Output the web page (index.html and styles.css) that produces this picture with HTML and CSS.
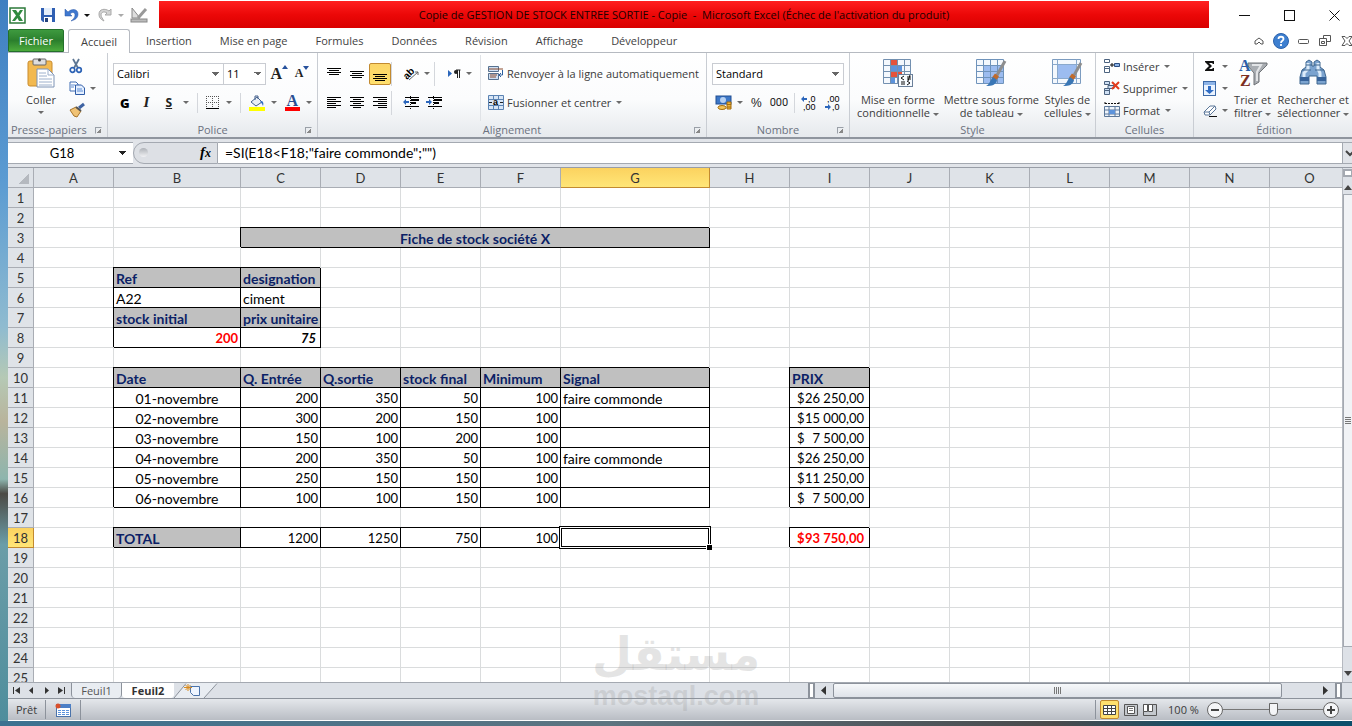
FILE: index.html
```html
<!DOCTYPE html>
<html lang="fr">
<head>
    <meta charset="UTF-8">
    <meta name="viewport" content="width=device-width, initial-scale=1.0">
    <title>Copie de GESTION DE STOCK ENTREE SORTIE - Copie - Microsoft Excel</title>
    <link rel="stylesheet" href="styles.css">
    <script src="sheet.js" defer></script>
</head>
<body>
<div class="window">

    <!-- Title bar -->
    <header class="titlebar">
        <div class="quick">
            <svg width="17" height="17" viewBox="0 0 17 17"><rect x="1" y="1" width="15" height="15" fill="#fff" stroke="#2c7a3a" stroke-width="1.500"/><path d="M3 3h4l2 3 2-3h3l-3.500 5.500L14 14h-4l-1.500-3L6 14H3l4-5.500z" fill="#2f8a3f"/></svg>
            <i class="vsep"></i>
            <button class="icon" aria-label="Enregistrer"><svg width="16" height="16" viewBox="0 0 16 16"><path d="M1 1h14v14H3l-2-2z" fill="#2f5fb3"/><rect x="4" y="1" width="8" height="7" fill="#e4eefb"/><rect x="4" y="10" width="8" height="5" fill="#fff"/><rect x="5" y="11" width="3" height="4" fill="#24427c"/></svg></button>
            <button class="icon undo" aria-label="Annuler"><svg width="16" height="16" viewBox="0 0 16 16"><path d="M2 2v7h7L7 7c3-3 5-1 5 1 0 3-2 4-4 6 4-1 7-3 7-7 0-5-6-6-10-2z" fill="#3f78cf" stroke="#2a57a5" stroke-width=".5"/></svg></button>
            <i class="caret dark"></i>
            <button class="icon redo" aria-label="Rétablir"><svg width="16" height="16" viewBox="0 0 16 16"><path d="M14 2v6H8l2-2C7 4 4 5 4 8c0 2 2 4 3 6-4-2-5-4-5-7 0-5 6-6 10-3z" fill="#d4d4d4" stroke="#a9a9a9"/></svg></button>
            <i class="caret pale"></i>
            <button class="icon rule" aria-label="Mode création"><svg width="18" height="16" viewBox="0 0 18 16"><path d="M2 1v10h8z" fill="#ddd" stroke="#888"/><path d="M16 2 8 11" stroke="#999" stroke-width="3"/><rect x="1" y="12" width="16" height="3" fill="#bbb" stroke="#888"/></svg></button>
            <i class="vsep"></i>
            <button class="icon more" aria-label="Personnaliser"><svg width="8" height="8" viewBox="0 0 8 8"><path d="M0 1h8" stroke="#111"/><path d="M0 4h8L4 8z" fill="#111"/></svg></button>
        </div>
        <h1 class="caption">Copie de GESTION DE STOCK ENTREE SORTIE - Copie&nbsp; -&nbsp; Microsoft Excel (Échec de l'activation du produit)</h1>
        <div class="controls">
            <button class="icon" aria-label="Réduire"><svg width="11" height="11"><path d="M0 5.500h11" stroke="#111"/></svg></button>
            <button class="icon" aria-label="Agrandir"><svg width="11" height="11"><rect x=".5" y=".5" width="10" height="10" fill="none" stroke="#111"/></svg></button>
            <button class="icon" aria-label="Fermer"><svg width="11" height="11"><path d="M.5.5l10 10M10.500.5l-10 10" stroke="#111"/></svg></button>
        </div>
    </header>

    <!-- Ribbon tabs -->
    <nav class="tabs">
        <button class="tab file">Fichier</button>
        <button class="tab active">Accueil</button>
        <button class="tab">Insertion</button>
        <button class="tab">Mise en page</button>
        <button class="tab">Formules</button>
        <button class="tab">Données</button>
        <button class="tab">Révision</button>
        <button class="tab">Affichage</button>
        <button class="tab">Développeur</button>
        <div class="doc-controls">
            <button class="icon" aria-label="Réduire le ruban"><svg width="10" height="8" viewBox="0 0 10 8"><path d="M1 4l4-3 4 3v3H7L5 5 3 7H1z" fill="#fff" stroke="#555"/></svg></button>
            <button class="icon" aria-label="Aide"><svg width="16" height="16" viewBox="0 0 16 16"><circle cx="8" cy="8" r="7.500" fill="#3d7fd0" stroke="#2b62ac"/><path d="M5.500 6c0-3 5-3 5 0 0 2-2.500 1.500-2.500 4M8 11v2" fill="none" stroke="#fff" stroke-width="1.800"/></svg></button>
            <button class="icon" aria-label="Réduire la fenêtre"><svg width="11" height="6"><rect x=".5" y="1.500" width="10" height="4" rx="1" fill="#fff" stroke="#555"/></svg></button>
            <button class="icon" aria-label="Restaurer la fenêtre"><svg width="12" height="11" viewBox="0 0 12 11"><path d="M4.500.5h7v6h-7z" fill="#fff" stroke="#555"/><path d="M.5 3.500h7v7h-7z" fill="#fff" stroke="#555"/><path d="M2.500 6.500h3v2h-3z" fill="none" stroke="#555"/></svg></button>
            <button class="icon" aria-label="Fermer la fenêtre"><svg width="12" height="10" viewBox="0 0 12 10"><path d="M1 .5h3l2 2 2-2h3L8 5l3 4.500H8l-2-2-2 2H1L4 5z" fill="#fff" stroke="#555"/></svg></button>
        </div>
    </nav>

    <!-- Ribbon -->
    <section class="ribbon">
        <div class="group clipboard">
            <div class="tools">
                <button class="big">
                    <svg width="28" height="30" viewBox="0 0 28 30"><rect x="1" y="3" width="24" height="25" rx="2" fill="#f2b950" stroke="#c98b2c"/><rect x="6" y="1" width="13" height="6" rx="1" fill="#ddd" stroke="#666"/><circle cx="12.500" cy="2" r="1.500" fill="#444"/><path d="M10 11h11l6 6v12H10z" fill="#fff" stroke="#7d93b5"/><path d="M21 11v6h6M12 15h7M12 18h8M12 21h13M12 24h13M12 27h13" fill="none" stroke="#9db0cc"/></svg>
                    <span>Coller</span><i class="caret"></i>
                </button>
                <div class="stack">
                    <button class="icon" aria-label="Couper"><svg width="14" height="15" viewBox="0 0 14 15"><path d="M4 0l5 9M10 0L5 9" stroke="#5d7693" stroke-width="1.800"/><circle cx="3.500" cy="11" r="2.300" fill="none" stroke="#2c62b5" stroke-width="1.700"/><circle cx="10" cy="11" r="2.300" fill="none" stroke="#2c62b5" stroke-width="1.700"/></svg></button>
                    <button class="icon" aria-label="Copier"><svg width="16" height="14" viewBox="0 0 16 14"><path d="M1 1h6l2 2v7H1z" fill="#fff" stroke="#3e6cb4"/><path d="M6.500 4h6l3 3v6.500h-9z" fill="#e4efff" stroke="#2f5ca7"/><path d="M8 8h5M8 10h6M2 4h4M2 6h3" stroke="#5b8bd4"/></svg><i class="caret"></i></button>
                    <button class="icon" aria-label="Reproduire la mise en forme"><svg width="16" height="15" viewBox="0 0 16 15"><path d="M15 1l-5 4" stroke="#3d62a2" stroke-width="3"/><path d="M1 7l6-3 5 4-4 6-3-1z" fill="#f0c274" stroke="#a6742a"/><path d="M7 4l5 4" stroke="#555" stroke-width="2"/></svg></button>
                </div>
            </div>
            <div class="group-name">Presse-papiers<i class="launcher"></i></div>
        </div>

        <div class="group font">
            <div class="tools rows">
                <div class="row tight">
                    <select class="combo name" aria-label="Police"><option>Calibri</option></select>
                    <select class="combo size" aria-label="Taille"><option>11</option></select>
                    <button class="glyph serif grow" aria-label="Agrandir la police">A<svg width="6" height="4"><path d="M0 4l3-4 3 4z" fill="#27519c"/></svg></button>
                    <button class="glyph serif shrink" aria-label="Réduire la police">A<svg width="6" height="4"><path d="M0 0h6L3 4z" fill="#27519c"/></svg></button>
                </div>
                <div class="row">
                    <button class="glyph bold">G</button>
                    <button class="glyph italic">I</button>
                    <button class="glyph under">S</button><i class="caret"></i>
                    <i class="vsep"></i>
                    <button class="icon" aria-label="Bordures"><svg width="14" height="14" viewBox="0 0 14 14"><path d="M.5 0v13M6.500 0v13M12.500 0v13M0 .5h13M0 6.500h13" stroke="#555" stroke-dasharray="1 1"/><path d="M0 12.500h13" stroke="#000"/></svg></button><i class="caret"></i>
                    <i class="vsep"></i>
                    <button class="icon" aria-label="Remplissage"><svg width="16" height="16" viewBox="0 0 16 16"><path d="M2 7l6-5 5 5-6 4z" fill="#e8eef7" stroke="#44618c"/><path d="M6 5V1h3v3" fill="none" stroke="#44618c"/><path d="M12 6c2 0 3 2 2 5-1-2-1-3-3-4z" fill="#356fc4"/><rect y="12" width="16" height="4" fill="#ff0"/></svg></button><i class="caret"></i>
                    <button class="glyph serif color">A</button><i class="caret"></i>
                </div>
            </div>
            <div class="group-name">Police<i class="launcher"></i></div>
        </div>

        <div class="group align">
            <div class="tools">
                <div class="stack wide">
                    <div class="row">
                        <button class="icon" aria-label="Aligner en haut"><svg width="14" height="14"><path d="M0 1.500h14M2 3.500h10M0 5.500h14M2 7.500h10" stroke="#000"/></svg></button>
                        <button class="icon" aria-label="Aligner au centre"><svg width="14" height="14"><path d="M0 4.500h14M2 6.500h10M0 8.500h14M2 10.500h10" stroke="#000"/></svg></button>
                        <button class="icon pressed" aria-label="Aligner en bas"><svg width="14" height="14"><path d="M0 7.500h14M2 9.500h10M0 11.500h14M2 13.500h10" stroke="#000"/></svg></button>
                        <i class="vsep"></i>
                        <button class="icon" aria-label="Orientation"><svg width="15" height="15" viewBox="0 0 15 15"><text x="0" y="11" class="ab" transform="rotate(-45 5 9)">ab</text><path d="M5 14l9-8M11 6h3v3" fill="none" stroke="#666"/></svg><i class="caret"></i></button>
                        <i class="vsep"></i>
                        <button class="icon" aria-label="Sens du texte"><svg width="13" height="10" viewBox="0 0 13 10"><path d="M0 1v7l4-3.500z" fill="#2b66bb"/><path d="M12.500 1H8M9.500 1v8M11.500 1v8" stroke="#222" fill="none"/><circle cx="8" cy="3" r="2" fill="#222"/></svg><i class="caret"></i></button>
                    </div>
                    <div class="row">
                        <button class="icon" aria-label="Gauche"><svg width="14" height="11"><path d="M0 .5h14M0 2.500h9M0 4.500h14M0 6.500h9M0 8.500h14M0 10.500h9" stroke="#000"/></svg></button>
                        <button class="icon" aria-label="Centrer"><svg width="14" height="11"><path d="M0 .5h14M3 2.500h8M0 4.500h14M3 6.500h8M0 8.500h14M3 10.500h8" stroke="#000"/></svg></button>
                        <button class="icon" aria-label="Droite"><svg width="14" height="11"><path d="M0 .5h14M5 2.500h9M0 4.500h14M5 6.500h9M0 8.500h14M5 10.500h9" stroke="#000"/></svg></button>
                        <i class="vsep"></i>
                        <button class="icon" aria-label="Diminuer le retrait"><svg width="16" height="14" viewBox="0 0 16 14"><path d="M2 1.500h14M2 10.500h14" stroke="#000"/><path d="M8 4h8M8 7h5" stroke="#000" stroke-width="2"/><path d="M7.500 0v14" stroke="#000" stroke-dasharray="1 1"/><path d="M0 6l3-3v2h3v2H3v2z" fill="#2b66bb"/></svg></button>
                        <button class="icon" aria-label="Augmenter le retrait"><svg width="16" height="14" viewBox="0 0 16 14"><path d="M2 1.500h14M2 10.500h14" stroke="#000"/><path d="M8 4h8M8 7h5" stroke="#000" stroke-width="2"/><path d="M7.500 0v14" stroke="#000" stroke-dasharray="1 1"/><path d="M6 6L3 3v2H0v2h3v2z" fill="#2b66bb"/></svg></button>
                    </div>
                </div>
                <div class="stack wrap">
                    <button class="label"><svg width="16" height="15" viewBox="0 0 16 15"><path d="M.5.5h10v5H.5zM.5 7.500h10v6H.5z" fill="#cfe0f4" stroke="#57718f"/><path d="M1 3h14M2 9h7M2 11h6" stroke="#8a4b2c"/><path d="M14.500 4v5h-3M13 7l-2 2 2 2" fill="none" stroke="#2b5f9f"/></svg>Renvoyer à la ligne automatiquement</button>
                    <button class="label"><svg width="16" height="15" viewBox="0 0 16 15"><path d="M.5.5h15v14H.5zM.5 4.500h15M.5 10.500h15M5.500.5v4M10.500.5v4M5.500 10.500v4M10.500 10.500v4" fill="#d8e6f6" stroke="#5b83b3"/><path d="M1 7.500h3M12 7.500h3" stroke="#222"/><text x="5" y="10" class="mini">a</text></svg>Fusionner et centrer<i class="caret"></i></button>
                </div>
            </div>
            <div class="group-name">Alignement<i class="launcher"></i></div>
        </div>

        <div class="group number">
            <div class="tools rows">
                <div class="row"><select class="combo format" aria-label="Format de nombre"><option>Standard</option></select></div>
                <div class="row">
                    <button class="icon" aria-label="Format comptabilité"><svg width="17" height="16" viewBox="0 0 17 16"><rect x="1" y="1" width="15" height="8" fill="#3c77c7" stroke="#214e92"/><ellipse cx="8" cy="5" rx="3" ry="3" fill="#b5d0f2"/><path d="M12 7h4v7h-4z" fill="#f0b536" stroke="#a36d10"/><path d="M12 9.500h4M12 12h4" stroke="#a36d10"/><ellipse cx="7" cy="12.500" rx="4" ry="2" fill="#f4c558" stroke="#a36d10"/></svg><i class="caret"></i></button>
                    <button class="glyph plain">%</button>
                    <button class="glyph plain zeros">000</button>
                    <i class="vsep"></i>
                    <button class="icon" aria-label="Ajouter une décimale"><svg width="16" height="16" viewBox="0 0 16 16"><path d="M0 4l3-3v2h3v2H3v2z" fill="#2b66bb"/><text x="7" y="7" class="dec">,0</text><text x="2" y="15" class="dec">,00</text></svg></button>
                    <button class="icon" aria-label="Réduire les décimales"><svg width="16" height="16" viewBox="0 0 16 16"><path d="M6 12l-3-3v2H0v2h3v2z" fill="#2b66bb"/><text x="2" y="7" class="dec">,00</text><text x="7" y="15" class="dec">,0</text></svg></button>
                </div>
            </div>
            <div class="group-name">Nombre<i class="launcher"></i></div>
        </div>

        <div class="group style">
            <div class="tools">
                <button class="big">
                    <svg width="30" height="30" viewBox="0 0 30 30"><path d="M.5 1.500h27v24H.5z" fill="#f4f8fd"/><path d="M7 1h7v6H7z" fill="#e4523b"/><path d="M7 7h12v6H7z" fill="#5c93dc"/><path d="M7 13h12v6H7z" fill="#e4523b"/><path d="M7 19h5v6H7z" fill="#5c93dc"/><path d="M.5 1.500h27v24H.5zM.5 7.500h27M.5 13.500h27M.5 19.500h27M7.500 1.500v24M14.500 1.500v24M21.500 1.500v24" fill="none" stroke="#7390b0"/><rect x="15.500" y="16.500" width="14" height="12" fill="#f7fbff" stroke="#6a7f99"/><path d="M21 18l-3 2 3 2M18 24h4M18 26h4M24 19h4M24 21h4M27 17l-2 6M24 23l3 2-3 2" fill="none" stroke="#111"/></svg>
                    <span>Mise en forme<br>conditionnelle <i class="caret"></i></span>
                </button>
                <button class="big">
                    <svg width="30" height="30" viewBox="0 0 30 30"><path d="M.5 1.500h27v24H.5z" fill="#f4f8fd"/><path d="M7 7h21v18H7z" fill="#9cbcf0"/><path d="M.5 1.500h27v24H.5zM.5 7.500h27M.5 13.500h27M.5 19.500h27M7.500 1.500v24M14.500 1.500v24M21.500 1.500v24" fill="none" stroke="#6f93bb"/><path d="M29 3l-9 16" stroke="#8d8d8d" stroke-width="3"/><path d="M21 17l-3 4" stroke="#c06a2b" stroke-width="5"/><path d="M17 19l4 3c-1 5-5 6-11 6 4-2 4-6 7-9z" fill="#3976b5"/></svg>
                    <span>Mettre sous forme<br>de tableau <i class="caret"></i></span>
                </button>
                <button class="big">
                    <svg width="30" height="30" viewBox="0 0 30 30"><path d="M.5 1.500h28v24H.5z" fill="#f4f8fd" stroke="#7c9cc0"/><path d="M5 6h19v15H5z" fill="#9cbcf0"/><path d="M5.500 1.500v24M24.500 1.500v24M.5 6.500h28M.5 20.500h28" stroke="#8aa9cc"/><path d="M29 5l-8 14" stroke="#8d8d8d" stroke-width="3"/><path d="M22 17l-3 4" stroke="#c06a2b" stroke-width="5"/><path d="M18 19l4 3c-1 5-5 6-11 6 4-2 4-6 7-9z" fill="#3976b5"/></svg>
                    <span>Styles de<br>cellules <i class="caret"></i></span>
                </button>
            </div>
            <div class="group-name">Style</div>
        </div>

        <div class="group cells">
            <div class="tools">
                <div class="stack">
                    <button class="label"><svg width="16" height="14" viewBox="0 0 16 14"><path d="M.5.5h5v3h-5zM.5 7.500h5v2h-5zM.5 9.500h5v4h-5z" fill="#fff" stroke="#4b627f"/><path d="M10.500 4.500h5v3h-5z" fill="#8db4e8" stroke="#2b4d80"/><path d="M6 6h4M8 4v4" stroke="#111"/></svg>Insérer<i class="caret"></i></button>
                    <button class="label"><svg width="16" height="14" viewBox="0 0 16 14"><path d="M.5.5h5v3h-5zM.5 7.500h5v2h-5zM.5 9.500h5v4h-5zM4 4.500h6v3H4z" fill="#cfe0f4" stroke="#4b627f"/><path d="M8 1l7 7M15 1L8 8" stroke="#e23b1d" stroke-width="2"/></svg>Supprimer<i class="caret"></i></button>
                    <button class="label"><svg width="16" height="16" viewBox="0 0 16 16"><path d="M.5 4.500h15v10H.5zM.5 8h15M.5 12h15M5 4v11M11 4v11" fill="#eef4fb" stroke="#5b7799"/><path d="M5 8h6v4H5z" fill="#5c93dc"/><path d="M1 1.500h14M1 0v3M15 0v3" stroke="#111" stroke-dasharray="2 1"/></svg>Format<i class="caret"></i></button>
                </div>
            </div>
            <div class="group-name">Cellules</div>
        </div>

        <div class="group edit">
            <div class="tools">
                <div class="stack">
                    <button class="icon" aria-label="Somme"><svg width="14" height="12" viewBox="0 0 14 12"><path d="M2 1h9v3h-1l-1-1H6l3 3-3 3h3l1-1h1v3H2v-1l4-4-4-4z" fill="#111"/></svg><i class="caret"></i></button>
                    <button class="icon" aria-label="Remplir"><svg width="14" height="15" viewBox="0 0 14 15"><rect x=".5" y=".5" width="12" height="14" fill="#eaf3ff" stroke="#3d6aa8"/><path d="M1 1h11v3H1z" fill="#8db4e8"/><path d="M5 5h3v4h3l-4.500 4L2 9h3z" fill="#2f6cc4"/></svg><i class="caret"></i></button>
                    <button class="icon" aria-label="Effacer"><svg width="14" height="13" viewBox="0 0 14 13"><path d="M1 8l6-6h5l1 3-6 6H2z" fill="#fff" stroke="#5b7799"/><path d="M1 8h5l6-6M6 8l1 3" fill="none" stroke="#5b7799"/><path d="M6 12.500h8" stroke="#111"/></svg><i class="caret"></i></button>
                </div>
                <button class="big">
                    <svg width="30" height="30" viewBox="0 0 30 30"><path d="M10 5h19v2l-8 8v9l-5 3V15l-6-7z" fill="#a9adb2" stroke="#6f7377"/><path d="M14 7h9l-4 7v9" fill="none" stroke="#e2e4e6" stroke-width="2"/><text x="1" y="13" class="az blue">A</text><text x="2" y="28" class="az red">Z</text></svg>
                    <span>Trier et<br>filtrer <i class="caret"></i></span>
                </button>
                <button class="big">
                    <svg width="30" height="30" viewBox="0 0 30 30"><path d="M8 4l3-2 3 2v4h2V4l3-2 3 2v5l4 3 2 7v7h-9v-8h-8v8H2v-7l2-7 4-3z" fill="#7ba3cf" stroke="#3f668f"/><path d="M2 19h9v4H2zM19 19h9v4h-9z" fill="#37639a"/><path d="M10 5v6l-4 4v4M20 5v6l2 4v4" stroke="#dcebf9" stroke-width="3" fill="none"/><path d="M4 12h9M17 12h9M8 7h6M16 7h6" stroke="#3f668f"/></svg>
                    <span>Rechercher et<br>sélectionner <i class="caret"></i></span>
                </button>
            </div>
            <div class="group-name">Édition</div>
        </div>
    </section>

    <!-- Formula bar -->
    <div class="formula-bar">
        <input class="name-box" aria-label="Zone Nom" value="G18"><i class="caret dark"></i>
        <div class="fx-area"><i class="knob"></i><button class="fx" aria-label="Insérer une fonction">f<small>x</small></button></div>
        <input class="formula" aria-label="Formule" value='=SI(E18&lt;F18;"faire commonde";"")'>
        <button class="expand" aria-label="Développer"><svg width="8" height="6"><path d="M0 1l4 4 4-4" fill="none" stroke="#444" stroke-width="2"/></svg></button>
    </div>

    <!-- Worksheet -->
    <main class="work">
        <div class="sheet"><table class="grid" id="grid"></table></div>
        <div class="vscroll">
            <i class="split"></i>
            <svg class="arrow" width="8" height="5"><path d="M0 5l4-5 4 5z" fill="#444"/></svg>
            <div class="vthumb"><i></i></div>
            <svg class="arrow" width="8" height="5"><path d="M0 0h8L4 5z" fill="#444"/></svg>
        </div>
        <div class="watermark"><span class="arabic" lang="ar">مستقل</span><span>mostaql.com</span></div>
    </main>

    <div class="sheet-bar">
        <div class="sheet-nav">
            <button class="icon" aria-label="Première"><svg width="7" height="7"><path d="M.5 0v7" stroke="#333"/><path d="M7 0v7L2 3.500z" fill="#333"/></svg></button>
            <button class="icon" aria-label="Précédente"><svg width="7" height="7"><path d="M5 0v7L1 3.500z" fill="#333"/></svg></button>
            <button class="icon" aria-label="Suivante"><svg width="7" height="7"><path d="M2 0v7l4-3.500z" fill="#333"/></svg></button>
            <button class="icon" aria-label="Dernière"><svg width="7" height="7"><path d="M6.500 0v7" stroke="#333"/><path d="M0 0v7l5-3.500z" fill="#333"/></svg></button>
        </div>
        <button class="sheet-tab">Feuil1</button>
        <button class="sheet-tab current">Feuil2</button>
        <button class="new-sheet" aria-label="Insérer une feuille"><svg width="44" height="15" viewBox="0 0 44 15"><path d="M0 15L12 0h32L30 15z" fill="#e9edf2"/><path d="M0 15L12 .5M30 15L43 .5" stroke="#8c929b"/><path d="M16.500 3.500h9v9h-6l-3-3z" fill="#eef5ff" stroke="#4b73aa"/><path d="M14 1v7M10 4.500h8M11.500 2l5 5M16.500 2l-5 5" stroke="#d98b1e"/></svg></button>
        <div class="hscroll">
            <i class="handle"></i>
            <svg width="6" height="9"><path d="M5 0v9L0 4.500z" fill="#333"/></svg>
            <div class="hthumb"><i></i></div>
            <svg class="right" width="6" height="9"><path d="M0 0v9l5-4.500z" fill="#333"/></svg>
            <i class="handle"></i>
        </div>
    </div>

    <!-- Status bar -->
    <footer class="status">
        <span class="ready">Prêt</span>
        <button class="icon macro" aria-label="Enregistrer une macro"><svg width="16" height="14" viewBox="0 0 16 14"><rect x="1.500" y="1.500" width="14" height="12" fill="#fff" stroke="#4b73aa"/><path d="M1 1h15v4H1z" fill="#4c7fc6"/><path d="M3 7.500h3M7 7.500h3M11 7.500h3M3 9.500h3M7 9.500h3M11 9.500h3M3 11.500h3M7 11.500h3M11 11.500h3" stroke="#5c93dc"/><circle cx="3" cy="3" r="2.500" fill="#d8502c"/></svg></button>
        <div class="views">
            <button class="icon on" aria-label="Normal"><svg width="13" height="10"><path d="M.5.5h12v9H.5zM.5 3.500h12M.5 6.500h12M4.500.5v9M8.500.5v9" fill="#fff" stroke="#444"/></svg></button>
            <button class="icon" aria-label="Mise en page"><svg width="14" height="12"><path d="M.5.500h13v11H.5z" fill="#c4c8cd" stroke="#555"/><path d="M3.500 2.500h7v7h-7z" fill="#fff" stroke="#555"/><path d="M5 4.500h4M5 6.500h4" stroke="#777"/></svg></button>
            <button class="icon" aria-label="Sauts de page"><svg width="14" height="12"><path d="M.5.500h13v11H.5z" fill="#c4c8cd" stroke="#555"/><path d="M.5.5h4v7h-4zM5.500.5h4v7h-4z" fill="#fff" stroke="#555"/></svg></button>
        </div>
        <label class="percent" for="zoom">100 %</label>
        <button class="round" aria-label="Zoom arrière"><svg width="8" height="8"><path d="M0 4h8" stroke="#444" stroke-width="2"/></svg></button>
        <input class="zoom" id="zoom" type="range" min="0" max="100" value="50">
        <button class="round" aria-label="Zoom avant"><svg width="8" height="8"><path d="M0 4h8M4 0v8" stroke="#444" stroke-width="2"/></svg></button>
    </footer>
</div>
</body>
</html>
```
FILE: styles.css
```css
* {
    box-sizing: border-box;
}
body {
    margin: 0;
    height: 100vh;
    overflow: hidden;
    padding: 0 0 5px 8px;
    font-family: "Open Sans", "Noto Sans", sans-serif;
    font-size: 11px;
    color: #3b3b3b;
    background: linear-gradient(to right, #3b7291, #5d7480 45%, #4a4a4c 78%, #0c4f6b 90%) bottom / 100% 5px no-repeat,
        linear-gradient(#3f7fc1, #5b9bd2 25%, #8fbbd0 45%, #b5c9b5 52%, #b9b49c 58%, #8db5ae 66%, #4b4a45 68%, #6b9da8 75%, #4e8d9c 100%);
}
button, input, select {
    font: inherit;
    color: inherit;
    border: none;
    background: none;
    padding: 0;
    margin: 0;
}
svg {
    display: block;
    flex: none;
    overflow: visible;
}
.window {
    height: 100%;
    display: flex;
    flex-direction: column;
    background: #fff;
    border-bottom: 1px solid #fff;
}
.icon {
    display: flex;
    align-items: center;
    gap: 5px;
}
.caret {
    display: inline-block;
    flex: none;
    border: 3px solid transparent;
    border-top-color: #6b6b6b;
    border-bottom: 0;
    vertical-align: middle;
}
.caret.dark {
    border-top-color: #111;
}
.caret.pale {
    border-top-color: #aaa;
}
.vsep {
    width: 1px;
    height: 14px;
    background: #a5a9af;
}

/* title bar */
.titlebar {
    display: flex;
    height: 29px;
    padding-top: 1px;
}
.quick {
    width: 151px;
    display: flex;
    align-items: center;
    gap: 7px;
    padding: 0 3px 0 1px;
}
.quick .caret {
    margin-left: -2px;
}
.quick .rule,
.quick .more {
    margin-left: -1px;
}
.caption {
    flex: 1;
    margin: 0;
    height: 27px;
    line-height: 28px;
    text-align: center;
    font-size: 11px;
    font-weight: normal;
    color: #200;
    background: linear-gradient(#ff2020, #ec0808 50%, #d90000);
    white-space: nowrap;
    overflow: hidden;
}
.controls {
    display: flex;
    gap: 34px;
    padding: 0 12px 0 30px;
}

/* ribbon tabs */
.tabs {
    height: 24px;
    display: flex;
    border-bottom: 1px solid #b6bac1;
}
.tab {
    padding: 0 14px;
    color: #3f3f3f;
}
.tab.file {
    width: 56px;
    padding: 0;
    margin-right: 4px;
    color: #fff;
    border: 1px solid #23702b;
    border-radius: 2px 2px 0 0;
    background: linear-gradient(#3e9a3f, #2b7f2d 50%, #4cab3c);
}
.tab.active {
    height: 24px;
    padding: 0 12px;
    margin-right: 2px;
    border: 1px solid #b6bac1;
    border-bottom: 0;
    border-radius: 3px 3px 0 0;
    background: #fff;
}
.doc-controls {
    display: flex;
    gap: 6px;
    margin: 0 -3px 0 auto;
}
.doc-controls .icon {
    width: 16px;
    justify-content: center;
}

/* ribbon */
.ribbon {
    display: flex;
    height: 86px;
    background: linear-gradient(#fff, #fbfcfd 55%, #e6e9ed);
    border-bottom: 2px solid #8f959e;
    overflow: hidden;
}
.group {
    flex: none;
    display: flex;
    flex-direction: column;
    border-right: 1px solid #c9cdd3;
    white-space: nowrap;
}
.clipboard {
    width: 100px;
}
.font {
    width: 210px;
}
.align {
    width: 389px;
}
.number {
    width: 143px;
}
.style {
    width: 246px;
}
.cells {
    width: 98px;
}
.edit {
    flex: 1;
    border-right: 0;
}
.tools {
    flex: 1;
    display: flex;
    padding: 2px 5px 0;
}
.tools.rows {
    flex-direction: column;
}
.group-name {
    display: flex;
    height: 16px;
    line-height: 17px;
    justify-content: center;
    color: #6c7280;
}
.launcher {
    width: 7px;
    height: 7px;
    margin: 6px 5px 0 auto;
    border: 1px solid #9aa0a8;
    border-right-color: transparent;
    border-bottom-color: transparent;
    background: linear-gradient(135deg, transparent 60%, #888 60%);
}
.group-name:has(.launcher)::before {
    content: "";
    width: 12px;
    margin-right: auto;
}
.clipboard .group-name:has(.launcher)::before {
    width: 3px;
    margin: 0;
}
.big {
    display: flex;
    flex-direction: column;
    align-items: center;
    padding-top: 3px;
    gap: 5px;
    line-height: 13px;
    text-align: center;
}
.clipboard .big {
    width: 56px;
}
.stack {
    display: flex;
    flex-direction: column;
    padding-left: 2px;
}
.clipboard .stack {
    padding-left: 0;
}
.stack > .icon,
.stack > .label {
    height: 22px;
}
.row {
    display: flex;
    align-items: center;
    height: 29px;
    margin-top: 4px;
}
.row + .row {
    margin-top: 0;
}
.label {
    display: flex;
    align-items: center;
    gap: 3px;
}
.label .caret {
    margin-left: 2px;
}
.combo {
    appearance: none;
    height: 22px;
    padding-left: 3px;
    border: 1px solid #c9ccd2;
    color: #000;
    background: linear-gradient(to bottom right, #666 50%, transparent 50%) right 3px center / 4px 4px no-repeat,
        linear-gradient(to bottom left, #666 50%, transparent 50%) right 7px center / 4px 4px no-repeat, #fff;
}
.combo.name {
    width: 112px;
}
.combo.size {
    width: 43px;
    border-left: 0;
}
.combo.format {
    width: 135px;
}
.font .row {
    gap: 8px;
}
.font .row.tight {
    gap: 0;
}
.glyph {
    display: flex;
    justify-content: center;
    color: #222;
}
.serif {
    font-family: "Liberation Serif", serif;
    font-weight: bold;
}
.grow {
    width: 26px;
    font-size: 16px;
}
.shrink {
    width: 20px;
    font-size: 12px;
}
.bold {
    width: 14px;
    font-size: 13px;
    font-weight: 800;
    color: #000;
    margin-left: 5px;
}
.italic {
    width: 14px;
    font: italic bold 15px "Liberation Serif", serif;
}
.under {
    width: 16px;
    font-size: 12px;
    font-weight: bold;
    text-decoration: underline;
}
.color {
    width: 16px;
    height: 17px;
    line-height: 13px;
    font-size: 16px;
    color: #2a4f93;
    border-bottom: 4px solid #f00;
}
.font .vsep {
    height: 20px;
    background: #d4d7dc;
}
.font .row .caret {
    margin-left: -2px;
}
.align .tools {
    padding-left: 8px;
}
.wide {
    width: 154px;
    padding: 0;
}
.wide .row {
    gap: 8px;
}
.wide .vsep {
    height: 24px;
    margin: 0 3px 0 -4px;
    background: #d4d7dc;
}
.wide .icon {
    width: 15px;
    justify-content: center;
}
.wide .icon:nth-child(n + 5) {
    width: 27px;
}
.wide .row + .row .icon:nth-child(n + 5) {
    width: 15px;
}
.wide .pressed {
    width: 22px;
    height: 22px;
    margin: 0 -4px 0 -3px;
    border: 1px solid #c28a30;
    border-radius: 2px;
    background: linear-gradient(#fcd567, #ffe06e);
}
.wrap {
    padding: 4px 0 0 7px;
    border-left: 1px solid #e0e3e7;
}
.wrap > .label {
    height: 29px;
}
.ab {
    font: bold 10px "Liberation Sans", sans-serif;
}
.mini {
    font: bold 9px "Liberation Sans", sans-serif;
}
.dec {
    font: 9px "Liberation Sans", sans-serif;
}
.number .row + .row {
    gap: 8px;
    padding-left: 3px;
}
.number .vsep {
    height: 20px;
    margin: 0 -2px;
    background: #d4d7dc;
}
.plain {
    font-size: 12px;
    font-family: "Liberation Sans", Arial, sans-serif;
}
.zeros {
    font-family: Roboto, sans-serif;
    font-size: 11px;
}
.style .tools {
    padding-left: 7px;
    gap: 5px;
}
.cells .tools {
    padding-left: 6px;
}
.edit .tools {
    padding-left: 7px;
    gap: 6px;
}
.az {
    font: bold 16px "Liberation Serif", serif;
}
.az.blue {
    fill: #2c5ea9;
}
.az.red {
    fill: #7c2e22;
}

/* formula bar */
.formula-bar {
    display: flex;
    align-items: center;
    height: 29px;
    padding: 3px 0 4px;
    background: #e1e4e9;
    border-bottom: 1px solid #989da6;
    font-family: Lato, sans-serif;
    font-size: 14px;
    color: #000;
}
.name-box {
    width: 108px;
    height: 22px;
    text-align: center;
    font-size: 13px;
    background: #fff;
    border: 1px solid #a4a9b1;
    border-width: 1px 0;
}
.formula-bar .caret {
    width: 17px;
    height: 22px;
    border: 1px solid #a4a9b1;
    border-width: 1px 0;
    background: linear-gradient(to bottom right, #222 50%, transparent 50%) 7px center / 4px 4px no-repeat,
        linear-gradient(to bottom left, #222 50%, transparent 50%) 3px center / 4px 4px no-repeat, #fff;
}
.fx-area {
    width: 85px;
    height: 22px;
    display: flex;
    align-items: center;
    justify-content: space-between;
    padding: 0 6px 0 5px;
    border: 1px solid #a4a9b1;
    border-radius: 11px 0 0 11px;
    background: #dde0e5;
}
.knob {
    width: 9px;
    height: 9px;
    border-radius: 50%;
    background: linear-gradient(#aeb2b8, #f1f2f4);
}
.fx {
    font: italic bold 15px "Liberation Serif", serif;
}
.fx small {
    font-size: 12px;
}
.formula {
    flex: 1;
    height: 22px;
    padding-left: 7px;
    background: #fff;
    border: 1px solid #a4a9b1;
    border-width: 1px 0;
}
.expand {
    width: 10px;
    height: 22px;
    overflow: hidden;
    padding-left: 3px;
    border: 1px solid #a4a9b1;
    border-right: 0;
}

/* worksheet */
.work {
    position: relative;
    flex: 1;
    min-height: 0;
    display: flex;
}
.sheet {
    flex: 1;
    min-width: 0;
    overflow: hidden;
}
.grid {
    width: 1342px;
    table-layout: fixed;
    border-collapse: separate;
    border-spacing: 0;
    font-family: Lato, sans-serif;
    font-size: 14px;
    color: #000;
}
.grid th,
.grid td {
    height: 20px;
    line-height: 17px;
    padding: 2px 2px 0;
    border: solid #dadcdd;
    border-width: 0 1px 1px 0;
    white-space: nowrap;
    text-align: left;
}
.grid th {
    padding: 2px 0 0;
    text-align: center;
    font-size: 13px;
    font-weight: normal;
    color: #333;
    background: #dfe3e8;
    border-color: #a9adb4;
}
.grid thead .hot,
.grid tbody .hot {
    background: linear-gradient(#fbd25f, #ffe678);
    border-color: #c28a30;
}
.corner {
    background: linear-gradient(135deg, transparent 50%, #b5b9bf 50%) 11px 6px / 10px 10px no-repeat, #dfe3e8 !important;
}
.col-head {
    width: 26px;
}
.col {
    width: 80px;
}
.col-b {
    width: 127px;
}
.col-g {
    width: 149px;
}
.grid .box {
    border-color: #000;
    box-shadow: -1px -1px 0 #000;
}
.grid .head {
    font-weight: bold;
    color: #0b1f66;
    background: #c0c0c0;
}
.grid .num {
    text-align: right;
    font-size: 13px;
}
.grid .mid {
    text-align: center;
}
.grid .red {
    font-weight: bold;
    color: #f00;
}
.grid .slant {
    font-weight: bold;
    font-style: italic;
    padding-right: 4px;
}
.grid .money {
    display: flex;
    justify-content: space-between;
    padding: 0 3px 0 5px;
    font-size: 13px;
}
.grid .selected {
    position: relative;
}
.selected::before {
    content: "";
    position: absolute;
    inset: -2px;
    border: 3px double #000;
    background: #fff;
}
.selected::after {
    content: "";
    position: absolute;
    right: -3px;
    bottom: -3px;
    width: 5px;
    height: 5px;
    background: #000;
    border: solid #fff;
    border-width: 1px 0 0 1px;
}
.vscroll {
    width: 10px;
    display: flex;
    flex-direction: column;
    align-items: center;
    overflow: hidden;
    background: #dde1e7;
    border-left: 1px solid #b5b9c0;
}
.split {
    width: 10px;
    height: 8px;
    margin: 1px 0 8px;
    background: #fff;
    border: 2px solid #a4a9b1;
}
.vthumb {
    flex: 1;
    width: 100%;
    margin: 4px 0 24px;
    display: flex;
    align-items: center;
    justify-content: center;
    background: #f1f3f6;
    border: 1px solid #a4a9b1;
    border-right: 0;
}
.vthumb i {
    width: 6px;
    height: 8px;
    background: repeating-linear-gradient(#777 0 1px, transparent 1px 2px);
}
.vscroll .arrow:last-child {
    margin-bottom: 6px;
}
/* stamp laid over the sheet and the bars under it */
.watermark {
    position: absolute;
    left: 587px;
    bottom: -28px;
    width: 162px;
    z-index: 2;
    display: flex;
    flex-direction: column;
    align-items: center;
    font: bold 27px/28px "Liberation Sans", Arial, sans-serif;
    color: rgba(150, 150, 150, 0.25);
    pointer-events: none;
}
.arabic {
    font: bold 46px/56px "DejaVu Sans", sans-serif;
}

/* sheet tabs and horizontal scrollbar */
.sheet-bar {
    display: flex;
    height: 16px;
    background: #dde1e7;
    border-top: 1px solid #a4a9b1;
    font-size: 12px;
}
.sheet-nav {
    width: 63px;
    display: flex;
    justify-content: space-between;
    padding: 0 6px 0 5px;
}
.sheet-tab {
    width: 51px;
    line-height: 14px;
    font-size: 11px;
    color: #555;
    background: #e9edf2;
    border-left: 1px solid #8c929b;
    border-right: 1px solid #8c929b;
    border-radius: 0 0 4px 4px;
}
.sheet-tab.current {
    font-weight: bold;
    width: 52px;
    color: #333;
    background: #fff;
    border-color: #fff;
}
.hscroll {
    width: 544px;
    margin-left: auto;
    display: flex;
    align-items: center;
}
.handle {
    width: 7px;
    height: 15px;
    background: #fff;
    border: 2px solid #8c929b;
    border-width: 1px 2px;
}
.hscroll svg {
    margin: 0 6px;
}
.hthumb {
    flex: 1;
    height: 15px;
    display: flex;
    align-items: center;
    justify-content: center;
    border: 1px solid #8c929b;
    border-radius: 2px;
    background: linear-gradient(#f6f8fa, #dfe3e9);
}
.hthumb i {
    width: 8px;
    height: 7px;
    background: repeating-linear-gradient(to right, #777 0 1px, transparent 1px 2px);
}
.hscroll .right {
    margin-left: 41px;
}
.hscroll .handle:last-child {
    margin-right: 10px;
}

/* status bar */
.status {
    display: flex;
    align-items: center;
    height: 22px;
    padding: 0 13px 0 8px;
    background: linear-gradient(#e4e7eb, #b9bdc4);
    border-top: 1px solid #8c929b;
}
.ready {
    width: 30px;
    line-height: 19px;
    border-right: 1px solid #8c929b;
}
.macro {
    height: 20px;
    padding: 0 9px;
    border-right: 1px solid #8c929b;
}
.views {
    display: flex;
    align-items: center;
    gap: 5px;
    margin-left: auto;
    padding-left: 4px;
    border-left: 1px solid #8c929b;
}
.views .on {
    height: 19px;
    padding: 0 2px;
    border: 1px solid #c28a30;
    border-radius: 2px;
    background: #ffe06e;
}
.percent {
    width: 50px;
    padding-left: 3px;
    text-align: center;
}
.round {
    width: 16px;
    height: 16px;
    display: flex;
    align-items: center;
    justify-content: center;
    border: 1px solid #666;
    border-radius: 50%;
    background: #f4f5f7;
}
.zoom {
    appearance: none;
    width: 100px;
    height: 16px;
    background: linear-gradient(#777, #777) center / 100% 1px no-repeat;
}
.zoom::-webkit-slider-thumb {
    appearance: none;
    width: 9px;
    height: 13px;
    border: 1px solid #666;
    border-radius: 1px 1px 5px 5px;
    background: #f4f5f7;
}
```
FILE: sheet.js
```js
const letters = "ABCDEFGHIJKLMNO".split("");

// cell address -> [text, class names]
const cells = {
    C3: ["Fiche de stock société X", "box head mid"],
    B5: ["Ref", "box head"],
    C5: ["designation", "box head"],
    B6: ["A22", "box"],
    C6: ["ciment", "box"],
    B7: ["stock initial", "box head"],
    C7: ["prix unitaire", "box head"],
    B8: ["200", "box num red"],
    C8: ["75", "box num slant"],
    I10: ["PRIX", "box head"],
    I18: ["93\u202f750,00", "box red", "money"],
    B18: ["TOTAL", "box head"],
    C18: ["1200", "box num"],
    D18: ["1250", "box num"],
    E18: ["750", "box num"],
    F18: ["100", "box num"],
    G18: ["", "box selected"]
};

["Date", "Q. Entrée", "Q.sortie", "stock final", "Minimum", "Signal"].forEach((title, i) => {
    cells[letters[i + 1] + 10] = [title, "box head"];
});

const moves = [
    [200, 350, 50, "faire commonde", "26\u202f250,00"],
    [300, 200, 150, "", "15\u202f000,00"],
    [150, 100, 200, "", "7\u202f500,00"],
    [200, 350, 50, "faire commonde", "26\u202f250,00"],
    [250, 150, 150, "", "11\u202f250,00"],
    [100, 100, 150, "", "7\u202f500,00"]
];
moves.forEach(([input, output, stock, signal, price], i) => {
    const row = 11 + i;
    cells["B" + row] = ["0" + (i + 1) + "-novembre", "box mid"];
    cells["C" + row] = [input, "box num"];
    cells["D" + row] = [output, "box num"];
    cells["E" + row] = [stock, "box num"];
    cells["F" + row] = [100, "box num"];
    cells["G" + row] = [signal, "box"];
    cells["I" + row] = [price, "box", "money"];
});

// Column headers
let html = "<thead><tr><th class='col-head corner'></th>";
letters.forEach((l) => {
    const size = l === "B" ? "col-b" : l === "G" ? "col-g hot" : "col";
    html += `<th class="${size}">${l}</th>`;
});
html += "</tr></thead><tbody>";

// Rows
for (let row = 1; row <= 25; row++) {
    html += `<tr><th class="${row === 18 ? "hot" : ""}">${row}</th>`;
    for (let i = 0; i < letters.length; i++) {
        const [text, names, kind] = cells[letters[i] + row] || ["", ""];
        const span = row === 3 && letters[i] === "C" ? 5 : 1;
        const body = kind === "money" ? `<div class="money"><span>$</span><span>${text}</span></div>` : text;
        html += `<td class="${names}" colspan="${span}">${body}</td>`;
        i += span - 1;
    }
    html += "</tr>";
}
document.getElementById("grid").innerHTML = html + "</tbody>";
```
